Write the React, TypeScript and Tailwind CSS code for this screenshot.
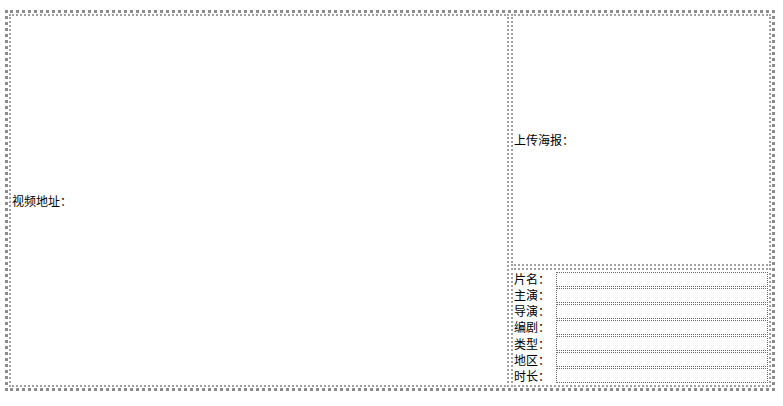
const fields = ["片名", "主演", "导演", "编剧", "类型", "地区", "时长"];

export default function App() {
  return (
    <div
      className="w-[783px] h-[406px] bg-white pt-[10px] pl-[5px] text-[12px] leading-[14px] text-black"
      style={{ fontFamily: '"Noto Sans CJK SC", "Noto Sans", sans-serif' }}
    >
      <div className="flex w-[770px] h-[381px] gap-[2px] p-[1px] border-[3px] border-dotted border-[#8c8c8c]">
        {/* video */}
        <div className="flex w-[500px] items-center pl-[1px] border-2 border-dotted border-[#a0a0a0]">
          视频地址：
        </div>

        <div className="flex flex-1 flex-col gap-[2px]">
          {/* poster */}
          <div className="flex h-[252px] items-center pl-[1px] border-2 border-dotted border-[#a0a0a0]">
            上传海报：
          </div>

          {/* info */}
          <div className="flex flex-1 flex-col justify-between py-[1px] pl-[1px] pr-[1px] border-2 border-dotted border-[#a0a0a0]">
            {fields.map((f) => (
              <div key={f} className="flex h-[16px] items-center">
                <span className="w-[42px] shrink-0 leading-[16px]">{f}：</span>
                <div className="h-[15px] flex-1 border border-dotted border-[#666]" />
              </div>
            ))}
          </div>
        </div>
      </div>
    </div>
  );
}
